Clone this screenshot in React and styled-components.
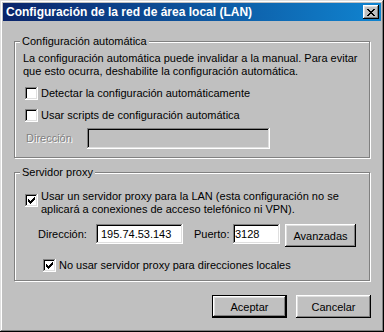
import React from 'react';
import styled, { createGlobalStyle } from 'styled-components';

const GlobalStyle = createGlobalStyle`
  html, body {
    margin: 0;
    padding: 0;
    background: #c0c0c0;
  }
  body {
    font-family: 'Liberation Sans', Arial, sans-serif;
    font-size: 11px;
    color: #000;
  }
`;

const Window = styled.div`
  width: 384px;
  height: 332px;
  box-sizing: border-box;
  padding: 3px;
  background: #c0c0c0;
  box-shadow: inset -1px -1px #000, inset 1px 1px #dfdfdf,
    inset -2px -2px #808080, inset 2px 2px #fff;
  display: flex;
  flex-direction: column;
`;

const TitleBar = styled.div`
  height: 18px;
  display: flex;
  align-items: center;
  justify-content: space-between;
  padding: 0 2px 0 3px;
  background: linear-gradient(to right, #0a246a, #1084d0);
`;

const Title = styled.span`
  color: #fff;
  font-weight: bold;
  font-size: 12px;
  line-height: 18px;
  white-space: nowrap;
`;

const CloseButton = styled.div`
  width: 16px;
  height: 14px;
  background: #c0c0c0;
  box-shadow: inset -1px -1px #000, inset 1px 1px #fff,
    inset -2px -2px #808080, inset 2px 2px #dfdfdf;
  display: flex;
  align-items: center;
  justify-content: center;
`;

const Body = styled.div`
  flex: 1;
  display: flex;
  flex-direction: column;
  padding: 14px 11px 0 11px;
`;

const GroupBox = styled.fieldset`
  margin: ${p => p.$top || 0}px 0 0 0;
  padding: 0;
  min-width: 0;
  border: 1px solid #808080;
  box-shadow: inset 1px 1px #fff, 1px 1px #fff;
`;

const Legend = styled.legend`
  margin-left: 5px;
  padding: 0 2px;
  line-height: 13px;
  background: #c0c0c0;
`;

const GroupBody = styled.div`
  display: flex;
  flex-direction: column;
  padding: ${p => p.$pad};
`;

const Paragraph = styled.div`
  line-height: 13px;
  white-space: nowrap;
`;

const CheckRow = styled.div`
  display: flex;
  align-items: ${p => (p.$multi ? 'flex-start' : 'center')};
  gap: 3px;
  margin: ${p => p.$top || 0}px 0 0 ${p => p.$indent || 0}px;
  line-height: 13px;
  white-space: nowrap;
`;

const Box = styled.span`
  flex: none;
  width: 13px;
  height: 13px;
  margin-top: ${p => p.$offset || 0}px;
  background: #fff;
  box-shadow: inset -1px -1px #fff, inset 1px 1px #808080,
    inset -2px -2px #dfdfdf, inset 2px 2px #000;
`;

const FieldRow = styled.div`
  display: flex;
  align-items: flex-start;
  margin: ${p => p.$top || 0}px 0 0 ${p => p.$indent || 0}px;
`;

const FieldLabel = styled.span`
  flex: none;
  width: ${p => p.$w}px;
  line-height: ${p => p.$h || 20}px;
  white-space: nowrap;
  color: ${p => (p.$disabled ? '#808080' : '#000')};
  text-shadow: ${p => (p.$disabled ? '1px 1px #fff' : 'none')};
`;

const TextField = styled.div`
  flex: none;
  box-sizing: border-box;
  width: ${p => p.$w}px;
  height: ${p => p.$h || 20}px;
  margin-right: ${p => p.$after || 0}px;
  padding-left: ${p => p.$inset || 3}px;
  line-height: ${p => p.$h || 20}px;
  background: ${p => (p.$disabled ? '#c0c0c0' : '#fff')};
  box-shadow: inset -1px -1px #fff, inset 1px 1px #808080,
    inset -2px -2px #dfdfdf, inset 2px 2px #000;
`;

const Button = styled.button`
  box-sizing: border-box;
  width: ${p => p.$w || 75}px;
  height: 23px;
  padding: 0;
  margin: 0;
  font: inherit;
  color: #000;
  background: #c0c0c0;
  border: ${p => (p.$default ? '1px solid #000' : 'none')};
  box-shadow: inset -1px -1px #000, inset 1px 1px #fff,
    inset -2px -2px #808080, inset 2px 2px #dfdfdf;
`;

const Footer = styled.div`
  display: flex;
  justify-content: flex-end;
  gap: 9px;
  margin: 14px -1px 0 0;
`;

const CloseIcon = () => (
  <svg width="8" height="7" viewBox="0 0 8 7" shapeRendering="crispEdges">
    <path d="M0 0h2v1h-2zM6 0h2v1h-2zM1 1h2v1h-2zM5 1h2v1h-2zM2 2h4v1h-4zM3 3h2v1h-2zM2 4h4v1h-4zM1 5h2v1h-2zM5 5h2v1h-2zM0 6h2v1h-2zM6 6h2v1h-2z" fill="#000" />
  </svg>
);

const Checkbox = ({ checked, offset }) => (
  <Box $offset={offset}>
    {checked && (
      <svg width="13" height="13" viewBox="0 0 13 13" shapeRendering="crispEdges">
        <path d="M3 5h1v1h1v1h1v-1h1v-1h1v-1h1v-1h1v3h-1v1h-1v1h-1v1h-1v1h-1v-1h-1v-1h-1z" fill="#000" />
      </svg>
    )}
  </Box>
);

export default function App() {
  return (
    <>
      <GlobalStyle />
      <Window>
        <TitleBar>
          <Title>Configuración de la red de área local (LAN)</Title>
          <CloseButton>
            <CloseIcon />
          </CloseButton>
        </TitleBar>
        <Body>
          <GroupBox>
            <Legend>Configuración automática</Legend>
            <GroupBody $pad="4px 8px 8px 8px">
              <Paragraph>
                La configuración automática puede invalidar a la manual. Para evitar
                <br />
                que esto ocurra, deshabilite la configuración automática.
              </Paragraph>
              <CheckRow $top={9} $indent={2}>
                <Checkbox />
                <span>Detectar la configuración automáticamente</span>
              </CheckRow>
              <CheckRow $top={9} $indent={2}>
                <Checkbox />
                <span>Usar scripts de configuración automática</span>
              </CheckRow>
              <FieldRow $top={6} $indent={3}>
                <FieldLabel $w={61} $h={21} $disabled>
                  Dirección
                </FieldLabel>
                <TextField $w={183} $h={21} $disabled />
              </FieldRow>
            </GroupBody>
          </GroupBox>

          <GroupBox $top={8}>
            <Legend>Servidor proxy</Legend>
            <GroupBody $pad="11px 8px 8px 8px">
              <CheckRow $multi $indent={2}>
                <Checkbox checked offset={4} />
                <span>
                  Usar un servidor proxy para la LAN (esta configuración no se
                  <br />
                  aplicará a conexiones de acceso telefónico ni VPN).
                </span>
              </CheckRow>
              <FieldRow $top={8} $indent={15}>
                <FieldLabel $w={58}>Dirección:</FieldLabel>
                <TextField $w={87} $after={11} $inset={5}>
                  195.74.53.143
                </TextField>
                <FieldLabel $w={39}>Puerto:</FieldLabel>
                <TextField $w={47} $after={5} $inset={2}>
                  3128
                </TextField>
                <Button $w={71}>Avanzadas</Button>
              </FieldRow>
              <CheckRow $top={12} $indent={20}>
                <Checkbox checked />
                <span>No usar servidor proxy para direcciones locales</span>
              </CheckRow>
            </GroupBody>
          </GroupBox>

          <Footer>
            <Button $default>Aceptar</Button>
            <Button>Cancelar</Button>
          </Footer>
        </Body>
      </Window>
    </>
  );
}
